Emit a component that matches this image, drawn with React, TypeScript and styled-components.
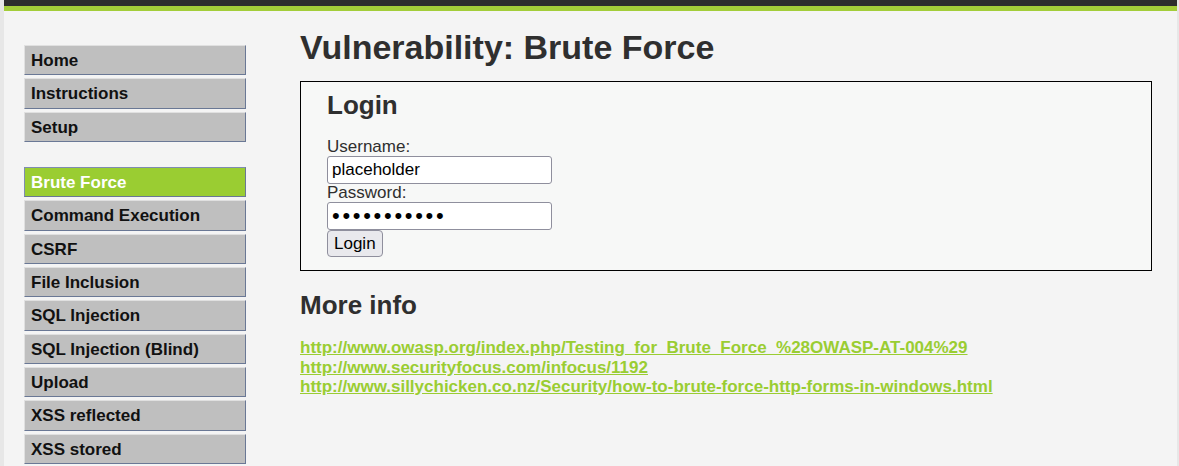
import React from "react";
import styled, { createGlobalStyle } from "styled-components";

const Global = createGlobalStyle`
  html, body { margin: 0; padding: 0; }
  body {
    background: #e7e7e7;
    font-family: "Liberation Sans", Arial, sans-serif;
    font-size: 17px;
    color: #2f2f2f;
  }
`;

const Container = styled.div`
  margin: 0 2px 0 4px;
  background: #f4f4f4;
  min-height: 466px;
`;

const Header = styled.div`
  height: 6px;
  background: #2d2d2d;
  border-bottom: 5px solid #a3cd39;
`;

const Body = styled.div`
  display: flex;
  align-items: flex-start;
`;

const Menu = styled.nav`
  width: 222px;
  padding: 34px 0 0 20px;
  display: flex;
  flex-direction: column;
  gap: 25px;
  flex-shrink: 0;
`;

const MenuGroup = styled.ul`
  list-style: none;
  margin: 0;
  padding: 0;
  display: flex;
  flex-direction: column;
  gap: 3px;
`;

const MenuItem = styled.li<{ $selected?: boolean }>`
  box-sizing: border-box;
  height: 30.33px;
  padding: 4px 6px;
  line-height: 21px;
  font-weight: bold;
  font-size: 17px;
  color: ${(p) => (p.$selected ? "#ffffff" : "#111111")};
  background: ${(p) => (p.$selected ? "#9acd32" : "#bfbfbf")};
  border: 1px solid ${(p) => (p.$selected ? "#7f8cb0" : "#e0e0e0")};
  border-right-color: #6a7895;
  border-bottom-color: #6a7895;
`;

const Main = styled.main`
  flex: 1;
  padding: 18px 25px 0 54px;
`;

const Title = styled.h1`
  margin: 0 0 15px;
  font-size: 34px;
  line-height: 37px;
  font-weight: bold;
  color: #2f2f2f;
`;

const CodeArea = styled.div`
  border: 1px solid #000;
  background: #f7f8f7;
  padding: 8px 26px 13px;
`;

const SubTitle = styled.h2`
  margin: 0;
  font-size: 26px;
  line-height: 30px;
  font-weight: bold;
  color: #2f2f2f;
`;

const Form = styled.form`
  display: flex;
  flex-direction: column;
  align-items: flex-start;
  margin-top: 18px;
`;

const Label = styled.label`
  font-size: 17px;
  line-height: 18px;
  color: #2f2f2f;
`;

const Input = styled.input<{ $mask?: boolean }>`
  box-sizing: border-box;
  width: 225px;
  height: 28px;
  margin: 0;
  padding: 1px 4px;
  border: 1px solid #8f8f9d;
  border-radius: 3px;
  background: #fff;
  font-family: "Liberation Sans", Arial, sans-serif;
  font-size: ${(p) => (p.$mask ? "22px" : "17px")};
  letter-spacing: ${(p) => (p.$mask ? "2.7px" : "normal")};
  color: #000;
  outline: none;
`;

const Button = styled.button`
  box-sizing: border-box;
  height: 27px;
  padding: 0 6px;
  margin: 0;
  border: 1px solid #8f8f9d;
  border-radius: 4px;
  background: #e9e9ed;
  font-family: "Liberation Sans", Arial, sans-serif;
  font-size: 17px;
  color: #000;
`;

const MoreInfo = styled(SubTitle)`
  margin-top: 19px;
`;

const Links = styled.ul`
  list-style: none;
  margin: 18px 0 0;
  padding: 0;
`;

const LinkItem = styled.li`
  line-height: 19.6px;
`;

const Link = styled.a`
  color: #9acd32;
  font-weight: bold;
  font-size: 17px;
  text-decoration: underline;
`;

const groups = [
  ["Home", "Instructions", "Setup"],
  [
    "Brute Force",
    "Command Execution",
    "CSRF",
    "File Inclusion",
    "SQL Injection",
    "SQL Injection (Blind)",
    "Upload",
    "XSS reflected",
    "XSS stored",
  ],
];

const links = [
  "http://www.owasp.org/index.php/Testing_for_Brute_Force_%28OWASP-AT-004%29",
  "http://www.securityfocus.com/infocus/1192",
  "http://www.sillychicken.co.nz/Security/how-to-brute-force-http-forms-in-windows.html",
];

export default function App() {
  return (
    <>
      <Global />
      <Container>
        <Header />
        <Body>
          <Menu>
            {groups.map((g, i) => (
              <MenuGroup key={i}>
                {g.map((item) => (
                  <MenuItem key={item} $selected={item === "Brute Force"}>
                    {item}
                  </MenuItem>
                ))}
              </MenuGroup>
            ))}
          </Menu>
          <Main>
            <Title>Vulnerability: Brute Force</Title>
            <CodeArea>
              <SubTitle>Login</SubTitle>
              <Form onSubmit={(e) => e.preventDefault()}>
                <Label>Username:</Label>
                <Input type="text" defaultValue="placeholder" />
                <Label>Password:</Label>
                <Input $mask type="password" defaultValue="placeholder" />
                <Button type="submit">Login</Button>
              </Form>
            </CodeArea>
            <MoreInfo>More info</MoreInfo>
            <Links>
              {links.map((l) => (
                <LinkItem key={l}>
                  <Link href={l}>{l}</Link>
                </LinkItem>
              ))}
            </Links>
          </Main>
        </Body>
      </Container>
    </>
  );
}
